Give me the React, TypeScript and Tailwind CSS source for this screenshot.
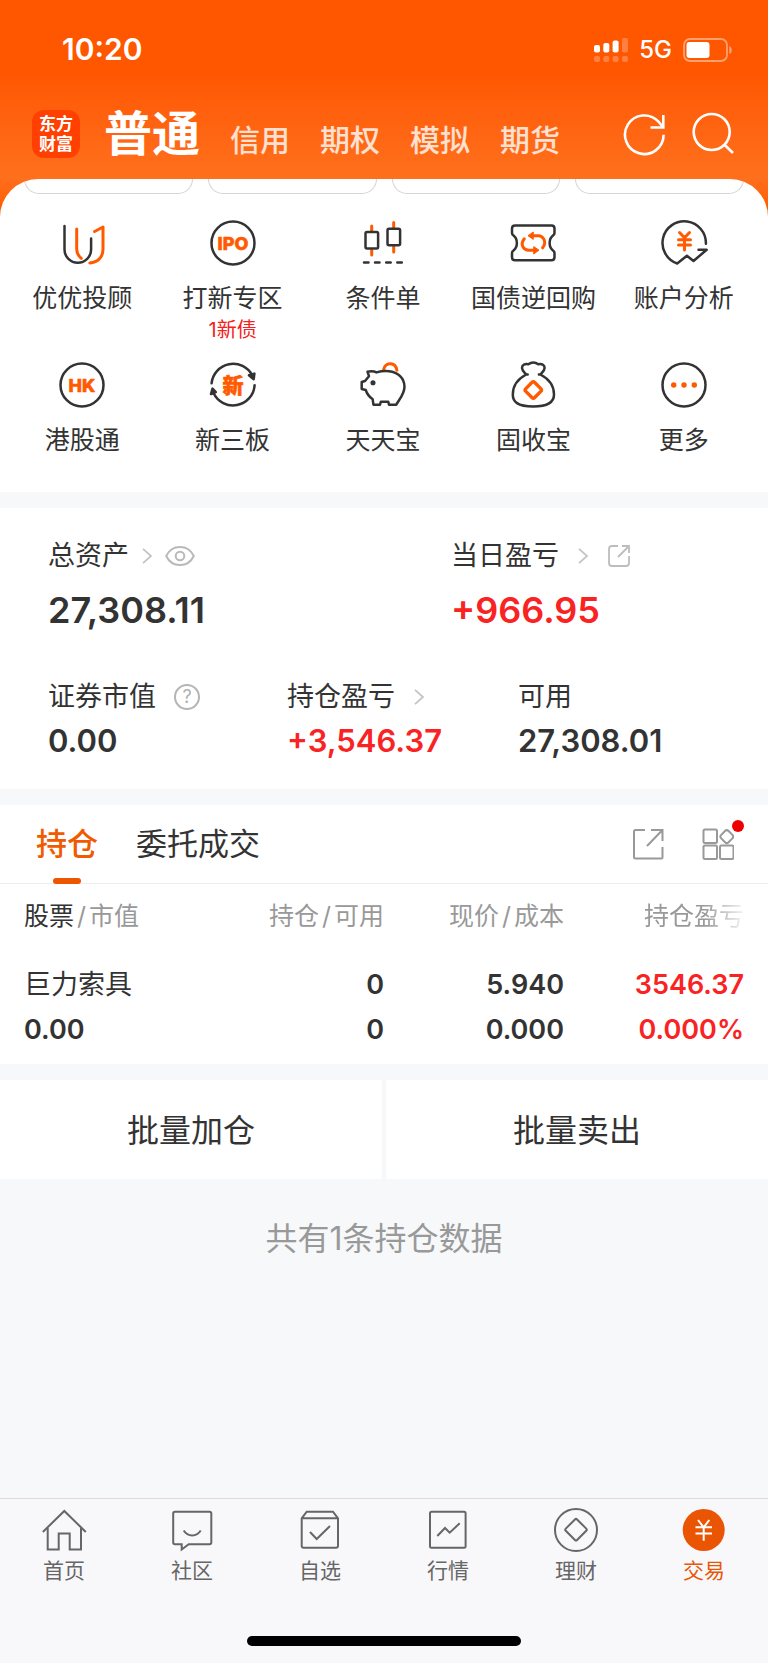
import type { ReactNode } from "react";

const INK = "#333333";
const ORANGE = "#ff5a00";

function Glyph({ children }: { children: ReactNode }) {
  return (
    <svg
      className="size-12 overflow-visible"
      viewBox="0 0 48 48"
      fill="none"
      stroke={INK}
      strokeWidth="2.5"
      strokeLinecap="round"
      strokeLinejoin="round"
      aria-hidden="true"
    >
      {children}
    </svg>
  );
}

function BadgeText({ size, children }: { size: number; children: string }) {
  return (
    <text
      x="24"
      y="24"
      fontSize={size}
      fontWeight="800"
      fill={ORANGE}
      stroke={ORANGE}
      strokeWidth="0.6"
      textAnchor="middle"
      dominantBaseline="central"
    >
      {children}
    </text>
  );
}

const shortcuts: { label: string; note?: string; icon: ReactNode }[] = [
  {
    label: "优优投顾",
    icon: (
      <Glyph>
        <path d="M6.5 7v23.5a13.3 13.3 0 0 0 26.6 0V19.5" />
        <g stroke={ORANGE} strokeWidth="3">
          <path d="M18.7 10v20c0 4 1.8 7 4.6 9.3" />
          <path d="M36.6 12.5 45 8v22c0 8-5 13.6-13.2 14" />
        </g>
      </Glyph>
    ),
  },
  {
    label: "打新专区",
    note: "1新债",
    icon: (
      <Glyph>
        <circle cx="24" cy="24" r="21.5" />
        <BadgeText size={18}>IPO</BadgeText>
      </Glyph>
    ),
  },
  {
    label: "条件单",
    icon: (
      <Glyph>
        <path d="M12.7 7v5M12.7 31v5M34.7 3.5v5M34.7 27v6" stroke={ORANGE} strokeWidth="3" />
        <rect x="6.5" y="13" width="12.6" height="16.5" rx="1.5" />
        <rect x="28.5" y="9.7" width="12.6" height="16.5" rx="1.5" />
        <path d="M5 43.5h4.5M16 43.5h4.5M27.2 43.5h4.5M38.3 43.5h4.5" />
      </Glyph>
    ),
  },
  {
    label: "国债逆回购",
    icon: (
      <Glyph>
        <path d="M6 6.5h36.5q3 0 3 3V14q0 1.5-1.5 2.5c-4.5 3.5-4.5 11.5 0 15q1.5 1 1.5 2.5v4.3q0 3-3 3H6q-3 0-3-3V34q0-1.5 1.5-2.5c4.5-3.5 4.5-11.5 0-15Q3 15.5 3 14V9.5q0-3 3-3z" />
        <g stroke={ORANGE} strokeWidth="3">
          <path d="M15.3 19.8c-4.6 5.7-.8 11.5 4.500 11.5h5" />
          <path d="M33.6 28.8c4.600-5.700.8-12-4.500-12h-5" />
        </g>
        <path d="m25 27.8 5 3.400-5 3.600zM24 13.200l-5 3.500 5 3.500z" fill={ORANGE} stroke={ORANGE} strokeWidth="1" />
      </Glyph>
    ),
  },
  {
    label: "账户分析",
    icon: (
      <Glyph>
        <path d="M45.9 24.7A21.7 21.7 0 1 0 17.2 44.5l9.7-7.8 6.6 5.3 13.2-11.3h-8.2" />
        <path
          d="m19.5 13.5 5 5.3 5-5.3M24.5 19v12M18.5 20.7h12M18.5 25.9h12"
          stroke={ORANGE}
          strokeWidth="3"
        />
      </Glyph>
    ),
  },
  {
    label: "港股通",
    icon: (
      <Glyph>
        <circle cx="24" cy="24" r="21.5" />
        <BadgeText size={18}>HK</BadgeText>
      </Glyph>
    ),
  },
  {
    label: "新三板",
    icon: (
      <Glyph>
        <path d="M2.6 22.3A21.6 21.6 0 0 1 43.3 14.5M45.6 24.3A21.6 21.6 0 0 1 4.5 32" />
        <path d="m39.9 14.3 5.5-1.7-.7 5.6zM3.5 27.7l-1.5 5.3 4.8-1.8z" fill={INK} />
        <BadgeText size={21}>新</BadgeText>
      </Glyph>
    ),
  },
  {
    label: "天天宝",
    icon: (
      <Glyph>
        <path d="M24.7 8.3c2-7.5 11.8-7.5 13.2 1" stroke={ORANGE} strokeWidth="3" />
        <path d="M8.5 10.8q5-1.4 9 .6c3.5-1 8-1.6 12.5-1.2 9 .8 15.5 7 15.5 15.5 0 7-4.5 11.5-8.2 18H30l-.7-3h-7.5l-.8 3h-6.6l-.7-5.4c-3-2-5.500-5-7-9.300l-4-1v-7l3.300-1 4-4.800z" />
        <circle cx="14" cy="21.7" r="1.3" fill={INK} />
      </Glyph>
    ),
  },
  {
    label: "固收宝",
    icon: (
      <Glyph>
        <path d="M17.2 13.5C15 11 13 9.5 13 7c0-3.5 3-4.3 6.3-3.7 3-2.2 7-2.2 10 0 3.3-.6 6.3.2 6.3 3.7 0 2.5-2 4-4.2 6.5C40 18 45 25 45 33.5c0 7-4.5 12-20.7 12S3.8 40.5 3.8 33.5C3.8 25 8.7 18 17.2 13.5zM17.2 13.5h1.5M31.4 13.5h-1.5" />
        <rect
          x="18"
          y="22.7"
          width="12.6"
          height="12.6"
          rx="2"
          transform="rotate(45 24.3 29)"
          stroke={ORANGE}
          strokeWidth="3.4"
        />
      </Glyph>
    ),
  },
  {
    label: "更多",
    icon: (
      <Glyph>
        <circle cx="24" cy="24" r="21.5" />
        <g fill={ORANGE} stroke="none">
          <circle cx="13.7" cy="24" r="2.7" />
          <circle cx="24" cy="24" r="2.7" />
          <circle cx="34.3" cy="24" r="2.7" />
        </g>
      </Glyph>
    ),
  },
];

const tabs: { label: string; active?: boolean; icon: ReactNode }[] = [
  {
    label: "首页",
    icon: (
      <>
        <path d="M.8 25 22.3 4l21.5 21" />
        <path d="M5.7 21v21.5h11V26.500h11v16H39V21" />
      </>
    ),
  },
  {
    label: "社区",
    icon: (
      <>
        <path d="M5 4.7h34.5q1.8 0 1.8 1.8v29q0 1.8-1.8 1.8H18.700l-7 5.200v-5.200H5q-1.800 0-1.800-1.800v-29q0-1.800 1.800-1.800z" />
        <path d="M13.7 23.5c4 6.5 13 6.5 17 0" />
      </>
    ),
  },
  {
    label: "自选",
    icon: (
      <>
        <path d="M3.7 11.3 8.7 4.7H35l5 6.6v27.5q0 2-2 2H5.700q-2 0-2-2zM3.700 11.300H40" />
        <path d="m12 25 6.7 7L32 19" />
      </>
    ),
  },
  {
    label: "行情",
    icon: (
      <>
        <rect x="4" y="4.7" width="35.6" height="36" rx="1.5" />
        <path d="m11.3 29 7.7-8 4.7 4.7 10-9.4" />
      </>
    ),
  },
  {
    label: "理财",
    icon: (
      <>
        <circle cx="22" cy="23" r="21" />
        <rect x="14" y="14.7" width="16" height="16" rx="1.5" transform="rotate(45 22 22.7)" />
      </>
    ),
  },
  {
    label: "交易",
    active: true,
    icon: (
      <>
        <circle cx="21.7" cy="23" r="21" fill="#ea5504" stroke="none" />
        <path d="m16 13 5.7 7.3L27.3 13M21.7 20.3v13.4M13.5 20.3H30M13.5 26.5H30" stroke="#ffffff" />
      </>
    ),
  },
];

function Chevron() {
  return (
    <svg className="h-4 w-3" viewBox="0 0 12 16" fill="none" stroke="#c4c4c4" strokeWidth="1.8" aria-hidden="true">
      <path d="m2 0.8 8 7.2-8 7.2" />
    </svg>
  );
}

function Slash() {
  return <span className="px-[3px]">/</span>;
}

function StatusBar() {
  return (
    <div className="flex h-[89px] items-center justify-between pt-[10px] pr-9 pl-[62px] text-white">
      <span className="text-[30px] font-semibold">10:20</span>
      <div className="flex items-center gap-[11px]">
        <svg className="h-6 w-[34px]" viewBox="0 0 34 24" fill="#ffffff" aria-hidden="true">
          <rect x="0" y="7" width="6" height="7.5" rx="2" />
          <rect x="9.3" y="5" width="6" height="9.5" rx="2" />
          <rect x="18.6" y="2.5" width="6" height="12" rx="2" />
          <g opacity="0.25">
            <rect x="28" y="0" width="6" height="14.5" rx="2" />
            <rect x="0" y="18" width="6" height="6" rx="2" />
            <rect x="9.3" y="18" width="6" height="6" rx="2" />
            <rect x="18.6" y="18" width="6" height="6" rx="2" />
            <rect x="28" y="18" width="6" height="6" rx="2" />
          </g>
        </svg>
        <span className="text-2xl font-medium">5G</span>
        <svg className="h-6 w-[49px]" viewBox="0 0 49 24" aria-hidden="true">
          <rect x="1" y="1" width="43" height="22" rx="6" fill="none" stroke="#ffffff" strokeOpacity="0.45" strokeWidth="1.8" />
          <rect x="3.5" y="4" width="23" height="16" rx="3" fill="#ffffff" />
          <path d="M46.3 8v8q2.5-1 2.5-4t-2.5-4z" fill="#ffffff" fillOpacity="0.45" />
        </svg>
      </div>
    </div>
  );
}

function Header() {
  return (
    <header className="bg-linear-to-b from-[#ff5600] from-40% to-[#ff701c] to-100%">
      <StatusBar />
      <div className="flex h-[90px] items-center justify-between pr-[34px] pl-8">
        <div className="flex items-center gap-6">
          <div className="flex size-12 flex-col items-center justify-center rounded-xl bg-[#ff4000] text-[17px] leading-[20px] font-bold text-white">
            <span>东方</span>
            <span>财富</span>
          </div>
          <nav className="flex items-baseline gap-[30px] pt-1 text-[30px] font-medium text-white/80">
            <a href="#normal" className="text-5xl font-bold text-white">
              普通
            </a>
            <a href="#credit">信用</a>
            <a href="#options">期权</a>
            <a href="#demo">模拟</a>
            <a href="#futures">期货</a>
          </nav>
        </div>
        <div className="flex gap-6">
          <button type="button" aria-label="刷新">
            <svg className="size-11" viewBox="0 0 44 44" fill="none" stroke="#ffffff" strokeWidth="2.6">
              <path d="M41.6 22.7A19.3 19.3 0 1 1 36.5 9.7l4.5 5.3" />
              <path d="M41.3 3v12.5H28.5" />
            </svg>
          </button>
          <button type="button" aria-label="搜索">
            <svg className="size-11" viewBox="0 0 44 44" fill="none" stroke="#ffffff" strokeWidth="2.6">
              <circle cx="21.7" cy="20" r="18" />
              <path d="m34 32.3 9 8.700" />
            </svg>
          </button>
        </div>
      </div>
    </header>
  );
}

function Shortcuts() {
  return (
    <section className="bg-linear-to-b from-[#ff6e1a] to-[#ff5a00] to-10%">
      <div className="overflow-hidden rounded-t-[38px] bg-white pb-[34px]">
        <div className="grid grid-cols-4 gap-[15px] px-6">
          {[0, 1, 2, 3].map((i) => (
            <div key={i} className="h-[15px] rounded-b-2xl border border-t-0 border-[#d4d4d4]" />
          ))}
        </div>
        <div className="mt-[25px] grid grid-cols-5 gap-y-[17px] pr-[9px] pl-[7px]">
          {shortcuts.map((item) => (
            <button key={item.label} type="button" className="flex flex-col items-center text-[#333333]">
              {item.icon}
              <span className="mt-[13px] text-[25px] leading-[36px]">{item.label}</span>
              {item.note && <span className="text-[20px] leading-[28px] text-[#f32121]">{item.note}</span>}
            </button>
          ))}
        </div>
      </div>
    </section>
  );
}

function Assets() {
  return (
    <section className="mt-4 bg-white pt-7 pr-9 pb-7 pl-12 text-[27px] leading-[40px] text-[#333333]">
      <div className="grid grid-cols-[403fr_281fr]">
        <div>
          <div className="flex items-center gap-3">
            总资产
            <Chevron />
            <button type="button" aria-label="隐藏金额">
              <svg className="h-5 w-[30px]" viewBox="0 0 30 20" fill="none" stroke="#b9b9b9" strokeWidth="2">
                <path d="M1.2 10C7-2 23-2 28.8 10 23 22 7 22 1.2 10z" />
                <circle cx="15" cy="10" r="4.3" />
              </svg>
            </button>
          </div>
          <p className="mt-[10px] text-4xl leading-[48px] font-semibold">27,308.11</p>
        </div>
        <div>
          <div className="flex items-center gap-[18px]">
            当日盈亏
            <Chevron />
            <button type="button" aria-label="分享盈亏">
              <svg className="size-6" viewBox="0 0 24 24" fill="none" stroke="#bdbdbd" strokeWidth="1.8">
                <path d="M11 2H5Q2 2 2 5v14q0 3 3 3h14q3 0 3-3v-7M15 2h7v7M22 2 11 13" />
              </svg>
            </button>
          </div>
          <p className="mt-[10px] text-4xl leading-[48px] font-semibold text-[#f92323]">+966.95</p>
        </div>
      </div>
      <div className="mt-[43px] grid grid-cols-[239fr_231fr_214fr]">
        <div>
          <div className="flex items-center gap-[18px]">
            证券市值
            <button
              type="button"
              className="flex size-[26px] items-center justify-center rounded-full border-2 border-[#b5b5b5] text-lg text-[#b0b0b0]"
            >
              ?
            </button>
          </div>
          <p className="mt-1 text-[31px] font-semibold">0.00</p>
        </div>
        <div>
          <div className="flex items-center gap-[18px]">
            持仓盈亏
            <Chevron />
          </div>
          <p className="mt-1 text-[31px] font-semibold text-[#f92323]">+3,546.37</p>
        </div>
        <div>
          <div>可用</div>
          <p className="mt-1 text-[31px] font-semibold">27,308.01</p>
        </div>
      </div>
    </section>
  );
}

function Positions() {
  return (
    <section className="mt-4 bg-white text-[#333333]">
      <div className="flex h-[79px] items-stretch justify-between border-b border-[#eeeeee] pr-[34px] pl-9 text-[31px]">
        <div className="flex gap-[38px]">
          <button type="button" className="relative font-medium text-[#f05a00]">
            持仓
            <span className="absolute inset-x-[17px] -bottom-px h-[6px] rounded-[3px] bg-[#ee5500]" />
          </button>
          <button type="button">委托成交</button>
        </div>
        <div className="flex items-center gap-[38px]">
          <button type="button" aria-label="分享持仓">
            <svg className="size-8" viewBox="0 0 32 32" fill="none" stroke="#999999" strokeWidth="2">
              <path d="M13 2H3.500Q2 2 2 3.500v25.500q0 1.500 1.500 1.500h26q1 0 1-1V19M19 2h11.500v11M30 2.500 15 18" />
            </svg>
          </button>
          <button type="button" aria-label="更多功能" className="relative">
            <svg className="size-8" viewBox="0 0 32 32" fill="none" stroke="#999999" strokeWidth="2">
              <rect x="1.5" y="1.5" width="13.5" height="13.5" rx="1.5" />
              <rect x="1.5" y="17.5" width="13.5" height="13.5" rx="1.5" />
              <rect x="18" y="17.5" width="13.5" height="13.5" rx="1.5" />
              <rect x="19.6" y="3.4" width="10.4" height="10.4" rx="2.5" transform="rotate(45 24.8 8.6)" />
            </svg>
            <span className="absolute -top-2 -right-[10px] size-3 rounded-full bg-[#ee0000]" />
          </button>
        </div>
      </div>
      <div className="px-6">
        <table className="w-full table-fixed text-right">
          <thead className="text-[25px] text-[#999999]">
            <tr className="h-[66px]">
              <th scope="col" className="text-left font-normal">
                <span className="text-[#333333]">股票</span>
                <Slash />
                市值
              </th>
              <th scope="col" className="font-normal">
                持仓
                <Slash />
                可用
              </th>
              <th scope="col" className="font-normal">
                现价
                <Slash />
                成本
              </th>
              <th scope="col" className="font-normal">
                <span className="[mask-image:linear-gradient(to_right,black_60%,transparent_105%)]">持仓盈亏</span>
              </th>
            </tr>
          </thead>
          <tbody className="text-[27px] leading-[45px] font-semibold">
            <tr>
              <td className="py-3 text-left">
                <div className="font-normal">巨力索具</div>
                <div>0.00</div>
              </td>
              <td className="py-3">
                <div>0</div>
                <div>0</div>
              </td>
              <td className="py-3">
                <div>5.940</div>
                <div>0.000</div>
              </td>
              <td className="py-3 text-[#f92323]">
                <div>3546.37</div>
                <div>0.000%</div>
              </td>
            </tr>
          </tbody>
        </table>
      </div>
    </section>
  );
}

function TabBar() {
  return (
    <footer className="mt-auto border-t border-[#dcdcdf] bg-[#f8f8fb] pt-2 pb-[17px]">
      <nav className="grid grid-cols-6">
        {tabs.map((tab) => (
          <a
            key={tab.label}
            href={"#" + tab.label}
            className={
              tab.active ? "flex flex-col items-center text-[#ea5504]" : "flex flex-col items-center text-[#666666]"
            }
          >
            <svg
              className="size-11 overflow-visible"
              viewBox="0 0 44 44"
              fill="none"
              stroke="currentColor"
              strokeWidth="2"
              aria-hidden="true"
            >
              {tab.icon}
            </svg>
            <span className="mt-[6px] text-[21px] leading-[28px]">{tab.label}</span>
          </a>
        ))}
      </nav>
      <div className="mx-auto mt-[51px] h-[10px] w-[274px] rounded-full bg-black" />
    </footer>
  );
}

export default function App() {
  return (
    <main className="flex min-h-screen flex-col bg-[#f6f8fa] font-['Inter','Noto_Sans_CJK_SC',sans-serif]">
      <Header />
      <Shortcuts />
      <Assets />
      <Positions />
      <div className="mt-4 grid grid-cols-2 gap-1 text-[32px] text-[#333333]">
        <button type="button" className="h-[99px] bg-white pt-[2px]">
          批量加仓
        </button>
        <button type="button" className="h-[99px] bg-white pt-[2px]">
          批量卖出
        </button>
      </div>
      <p className="mt-9 text-center text-[32px] leading-[48px] text-[#999999]">共有1条持仓数据</p>
      <TabBar />
    </main>
  );
}
